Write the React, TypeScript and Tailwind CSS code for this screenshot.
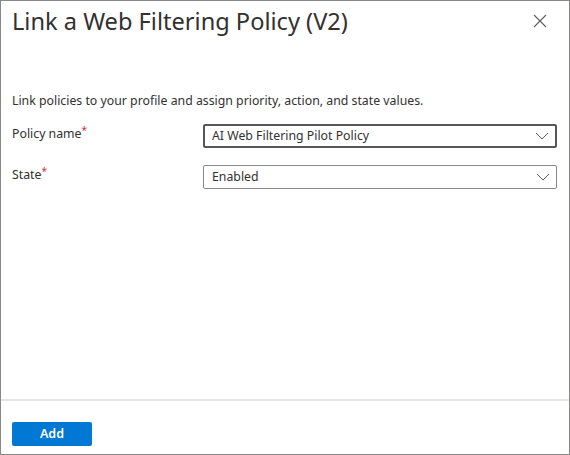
const font = { fontFamily: '"Segoe UI", "Noto Sans", sans-serif' };

const Chevron = () => (
  <svg width="14" height="8" viewBox="0 0 14 8" className="text-[#605e5c]">
    <polyline points="1,1 7,7 13,1" fill="none" stroke="currentColor" strokeWidth="1" />
  </svg>
);

const Select = ({ value, focused }: { value: string; focused?: boolean }) => (
  <div
    className={`flex h-[24px] w-[354px] items-center justify-between rounded-[2px] bg-white pr-[6px] ${
      focused ? "border-2 border-[#575757] pl-[7px]" : "border border-[#8a8886] pl-[8px]"
    }`}
  >
    <span className="text-[12.3px] leading-none text-[#323130]">{value}</span>
    <Chevron />
  </div>
);

const Required = () => <span className="align-top text-[10px] leading-none text-[#d13438]">*</span>;

const App = () => {
  return (
    <div
      className="flex h-[455px] w-[570px] flex-col border border-[#8a8886] bg-white text-[#323130]"
      style={font}
    >
      {/* header */}
      <div className="flex items-start justify-between pl-[11px] pr-[22px] pt-[4px]">
        <h1 className="text-[23.6px] font-normal leading-[32px] text-[#323130]">
          Link a Web Filtering Policy (V2)
        </h1>
        <button className="mt-[9px] text-[#605e5c]">
          <svg width="14" height="14" viewBox="0 0 14 14">
            <path d="M1 1 L13 13 M13 1 L1 13" stroke="currentColor" strokeWidth="1.1" fill="none" />
          </svg>
        </button>
      </div>

      {/* body */}
      <div className="flex flex-1 flex-col px-[11px] pt-[55px]">
        <p className="text-[12.3px] leading-[18px]">
          Link policies to your profile and assign priority, action, and state values.
        </p>

        <div className="mt-[14px] flex items-start">
          <label className="w-[191px] pt-[1px] text-[12.3px] leading-[18px]">
            Policy name<Required />
          </label>
          <Select value="AI Web Filtering Pilot Policy" focused />
        </div>

        <div className="mt-[17px] flex items-start">
          <label className="w-[191px] pt-[1px] text-[12.3px] leading-[18px]">
            State<Required />
          </label>
          <Select value="Enabled" />
        </div>
      </div>

      {/* footer */}
      <div className="border-t-2 border-[#e5e5e5] px-[11px] pb-[8px] pt-[19px]">
        <button className="h-[24px] w-[80px] rounded-[2px] bg-[#0078d4] text-[12.5px] font-semibold text-white">
          Add
        </button>
      </div>
    </div>
  );
};

export default App;
